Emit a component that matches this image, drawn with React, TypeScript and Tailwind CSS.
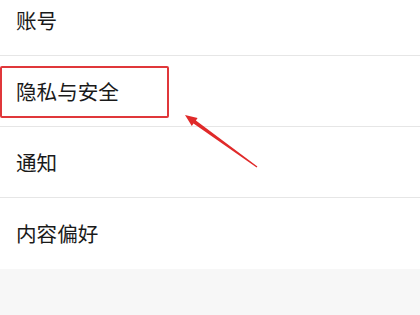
import React from "react";

const rows = ["账号", "隐私与安全", "通知", "内容偏好"];

export default function App() {
  return (
    <div
      className="relative w-[420px] h-[315px] overflow-hidden bg-[#f7f7f7]"
      style={{ fontFamily: '"Noto Sans CJK SC", "Noto Sans", sans-serif' }}
    >
      <div className="mt-[-15px] bg-white">
        {rows.map((r, i) => (
          <div
            key={r}
            className={`flex items-center h-[71px] pl-4 text-[20.6px] text-[#1a1a1a] ${
              i < rows.length - 1 ? "border-b border-[#e6e6e6]" : ""
            }`}
          >
            {r}
          </div>
        ))}
      </div>
      <div className="absolute left-0 top-[66px] w-[169px] h-[52px] border-2 border-[#e0373a] rounded-[2px]" />
      <svg className="absolute left-0 top-0" width="420" height="315" viewBox="0 0 420 315">
        <polygon
          points="185,115 197.6,118 195.9,120.4 257.4,166.6 256.6,167.4 193.5,123.6 191.8,126"
          fill="#e02a2a"
        />
      </svg>
    </div>
  );
}
